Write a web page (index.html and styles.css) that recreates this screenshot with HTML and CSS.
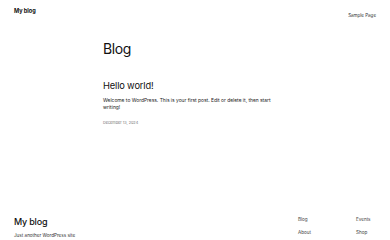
FILE: index.html
```html
<!DOCTYPE html>
<html lang="en">
<head>
<meta charset="utf-8">
<title>My blog</title>
<link rel="stylesheet" href="styles.css">
</head>
<body>
<header class="site-header">
  <a class="site-title" href="#">My blog</a>
  <nav class="header-nav"><a href="#">Sample Page</a></nav>
</header>
<main class="content">
  <h1 class="page-title">Blog</h1>
  <article class="post">
    <h2 class="post-title">Hello world!</h2>
    <p class="post-excerpt">Welcome to WordPress. This is your first post. Edit or delete it, then start writing!</p>
    <time class="post-date">December 13, 2024</time>
  </article>
</main>
<footer class="site-footer">
  <div class="footer-brand">
    <div class="footer-title">My blog</div>
    <div class="footer-tagline">Just another WordPress site</div>
  </div>
  <nav class="footer-nav">
    <a href="#">Blog</a>
    <a href="#">Events</a>
    <a href="#">About</a>
    <a href="#">Shop</a>
  </nav>
</footer>
</body>
</html>
```
FILE: styles.css
```css
html, body {
  margin: 0;
  padding: 0;
  background: #ffffff;
  color: #111111;
  font-family: Inter, "Noto Sans", "Liberation Sans", sans-serif;
}
a {
  color: inherit;
  text-decoration: none;
}
.site-header {
  display: flex;
  justify-content: space-between;
  align-items: center;
  padding: 7px 14px 0 14px;
  height: 7px;
}
.site-title {
  font-size: 5.6px;
  font-weight: 700;
  letter-spacing: -0.05px;
}
.header-nav a {
  font-size: 4.5px;
  color: #333;
}
.content {
  width: 184px;
  margin: 0 auto;
  padding-top: 26px;
}
.page-title {
  margin: 0;
  font-size: 14px;
  font-weight: 400;
  line-height: 18px;
  letter-spacing: -0.4px;
}
.post {
  margin-top: 22px;
}
.post-title {
  margin: 0;
  font-size: 9.3px;
  font-weight: 400;
  line-height: 12px;
  letter-spacing: -0.15px;
}
.post-excerpt {
  max-width: 172px;
  margin: 5px 0 0 0;
  font-size: 4.9px;
  line-height: 7px;
  color: #222;
}
.post-date {
  display: block;
  margin-top: 8.5px;
  font-size: 3.8px;
  line-height: 5px;
  color: #777;
}
.site-footer {
  display: flex;
  justify-content: space-between;
  padding: 0 14px 0 14px;
  margin-top: 91px;
}
.footer-title {
  font-size: 9px;
  font-weight: 500;
  line-height: 11px;
  letter-spacing: -0.2px;
}
.footer-tagline {
  margin-top: 6px;
  font-size: 4.6px;
  line-height: 5px;
  color: #333;
}
.footer-nav {
  display: grid;
  grid-template-columns: 58px 20px;
  grid-auto-rows: 5px;
  row-gap: 8px;
  font-size: 4.6px;
  line-height: 5px;
  color: #444;
  padding-top: 1px;
}
```
